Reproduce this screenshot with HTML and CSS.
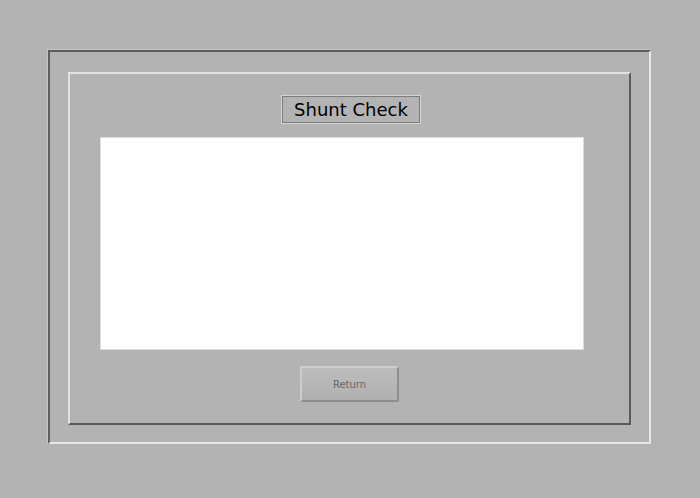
FILE: index.html
```html
<!DOCTYPE html>
<html>
<head>
<meta charset="utf-8">
<link rel="stylesheet" href="styles.css">
</head>
<body>
<div class="outer">
  <div class="inner">
    <div class="title">Shunt Check</div>
    <div class="panel"></div>
    <button class="btn">Return</button>
  </div>
</div>
</body>
</html>
```
FILE: styles.css
```css
html, body {
  margin: 0;
  padding: 0;
  background: #b3b3b3;
  width: 700px;
  height: 498px;
  overflow: hidden;
}
body {
  font-family: "DejaVu Sans", Verdana, sans-serif;
  padding-top: 50px;
  padding-left: 48px;
  box-sizing: border-box;
}
.outer {
  box-sizing: border-box;
  width: 603px;
  height: 394px;
  border: 2px solid;
  border-color: #5e5e5e #e6e6e6 #e6e6e6 #5e5e5e;
  box-shadow: -1px -1px 0 #c6c6c6;
  padding: 20px 18px 17px 18px;
}
.inner {
  box-sizing: border-box;
  width: 563px;
  height: 353px;
  border: 2px solid;
  border-color: #e2e2e2 #5a5a5a #5a5a5a #e2e2e2;
  display: flex;
  flex-direction: column;
  align-items: center;
}
.title {
  box-sizing: border-box;
  margin-top: 22px;
  margin-left: 3px;
  width: 138px;
  height: 27px;
  border: 1px solid #7c7c7c;
  box-shadow: 0 0 0 1px #d4d4d4;
  font-size: 18px;
  line-height: 25px;
  text-align: center;
  color: #000;
}
.panel {
  align-self: flex-start;
  margin-left: 30px;
  margin-top: 14px;
  width: 484px;
  height: 213px;
  box-sizing: border-box;
  background: #fff;
  border: 1px solid #dcdcdc;
}
.btn {
  margin-top: 16px;
  width: 99px;
  height: 36px;
  box-sizing: border-box;
  border: 2px solid;
  border-color: #cdcdcd #8e8e8e #8e8e8e #cdcdcd;
  border-radius: 2px;
  background: linear-gradient(#bcbcbc, #b0b0b0);
  color: #666;
  font-family: "DejaVu Sans", Verdana, sans-serif;
  font-size: 10px;
  padding: 0;
}
```
